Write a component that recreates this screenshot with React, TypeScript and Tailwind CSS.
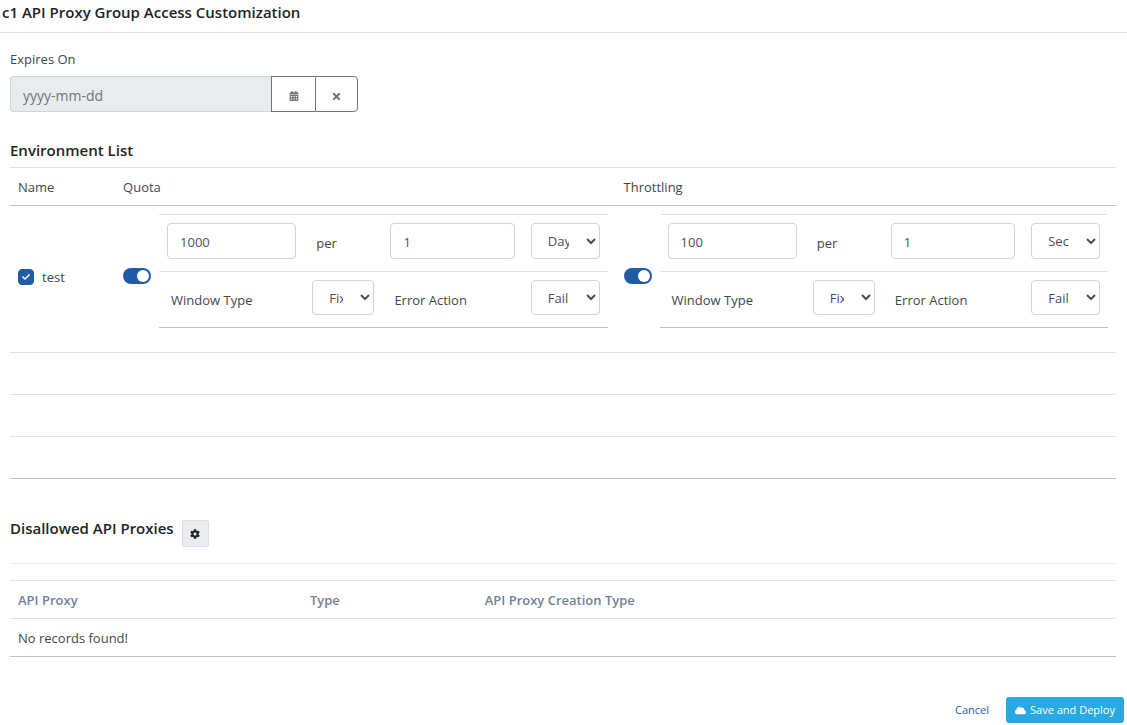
import { useState } from 'react'
import { FaCalendarAlt, FaCheck, FaCloud, FaCog, FaTimes } from 'react-icons/fa'

type Limit = {
  label: string
  amount: string
  period: string
  unit: string
  units: string[]
}

const quota: Limit = {
  label: 'Quota',
  amount: '1000',
  period: '1',
  unit: 'Day',
  units: ['Day', 'Hour', 'Minute'],
}

const throttling: Limit = {
  label: 'Throttling',
  amount: '100',
  period: '1',
  unit: 'Second',
  units: ['Second', 'Minute'],
}

const inputClass =
  'block h-9 w-full rounded border border-[#ced4da] bg-white px-3 pt-0.5 text-[#495057] outline-none'

const selectClass =
  'block w-full rounded border border-[#ced4da] bg-white pr-3.5 pl-3 text-[#495057] outline-none'

function Toggle({ label }: { label: string }) {
  const [on, setOn] = useState(true)

  return (
    <input
      type="checkbox"
      role="switch"
      aria-label={label}
      checked={on}
      onChange={() => setOn(!on)}
      className="flex h-4 w-7 shrink-0 appearance-none items-center rounded-full bg-gray-300 px-0.5 before:size-3 before:rounded-full before:bg-white checked:justify-end checked:bg-[#225ba5]"
    />
  )
}

function LimitEditor({ limit }: { limit: Limit }) {
  return (
    <div className="flex items-center gap-2">
      <div className="pb-1.5">
        <Toggle label={limit.label} />
      </div>
      <table className="mb-4 min-w-0 flex-1 table-fixed border-collapse border-b border-[#bfc3c7]">
        <colgroup>
          <col className="w-[32.4%]" />
          <col className="w-[17.4%]" />
          <col className="w-[31.3%]" />
          <col className="w-[18.9%]" />
        </colgroup>
        <tbody className="align-top">
          <tr className="border-t border-[#dee2e6]">
            <td className="px-2 pt-2 pb-3">
              <input
                aria-label={`${limit.label} amount`}
                defaultValue={limit.amount}
                className={inputClass}
              />
            </td>
            <td className="px-3 pt-[18px]">per</td>
            <td className="px-2 pt-2 pb-3">
              <input
                aria-label={`${limit.label} period`}
                defaultValue={limit.period}
                className={inputClass}
              />
            </td>
            <td className="px-2 pt-2 pb-3">
              <select
                aria-label={`${limit.label} unit`}
                defaultValue={limit.unit}
                className={`h-9 ${selectClass}`}
              >
                {limit.units.map((unit) => (
                  <option key={unit}>{unit}</option>
                ))}
              </select>
            </td>
          </tr>
          <tr className="border-t border-[#dee2e6]">
            <td className="px-3 pt-[18px]">
              <label htmlFor={`${limit.label}-window`}>Window Type</label>
            </td>
            <td className="px-2 pt-2 pb-3">
              <select
                id={`${limit.label}-window`}
                className={`h-[35px] ${selectClass}`}
              >
                <option>Fixed</option>
                <option>Sliding</option>
              </select>
            </td>
            <td className="px-3 pt-[18px]">
              <label htmlFor={`${limit.label}-error`}>Error Action</label>
            </td>
            <td className="px-2 pt-2 pb-3">
              <select
                id={`${limit.label}-error`}
                className={`h-[35px] ${selectClass}`}
              >
                <option>Fail</option>
                <option>Continue</option>
              </select>
            </td>
          </tr>
        </tbody>
      </table>
    </div>
  )
}

function EnvironmentTable() {
  const [checked, setChecked] = useState(true)

  return (
    <table className="w-full table-fixed border-collapse border-b border-[#bfc3c7]">
      <colgroup>
        <col className="w-[9.5%]" />
        <col />
        <col />
      </colgroup>
      <thead>
        <tr className="h-[38px] border-t border-b border-t-[#dee2e6] border-b-[#bfc3c7] text-left">
          <th className="px-2 font-normal">Name</th>
          <th className="px-2 font-normal">Quota</th>
          <th className="px-2 font-normal">Throttling</th>
        </tr>
      </thead>
      <tbody>
        <tr>
          <td className="p-2">
            <label className="flex items-center gap-2 pb-1">
              <span className="relative size-4">
                <input
                  type="checkbox"
                  checked={checked}
                  onChange={() => setChecked(!checked)}
                  className="peer block size-4 appearance-none rounded border border-gray-400 checked:border-[#225ba5] checked:bg-[#225ba5]"
                />
                <FaCheck className="pointer-events-none absolute inset-1 hidden size-2 text-white peer-checked:block" />
              </span>
              test
            </label>
          </td>
          <td className="p-2">
            <LimitEditor limit={quota} />
          </td>
          <td className="p-2">
            <LimitEditor limit={throttling} />
          </td>
        </tr>
        {[0, 1, 2].map((row) => (
          <tr key={row} className="h-[42px] border-t border-[#dee2e6]">
            <td colSpan={3} />
          </tr>
        ))}
      </tbody>
    </table>
  )
}

export default function App() {
  return (
    <div className="bg-white font-['Open_Sans','Noto_Sans',sans-serif] text-[13px] leading-5 text-[#3f474e]">
      <header className="border-b border-[#dee2e6] px-0.5 pt-px pb-[9px]">
        <h1 className="text-[15px] leading-[22px] font-semibold text-[#212529]">
          c1 API Proxy Group Access Customization
        </h1>
      </header>

      <main className="pr-[11px] pl-[10px]">
        <div className="pt-4">
          <label htmlFor="expires" className="block">
            Expires On
          </label>
          <div className="mt-[7px] flex w-[348px]">
            <input
              id="expires"
              readOnly
              placeholder="yyyy-mm-dd"
              className="h-9 min-w-0 flex-1 rounded-l border border-r-0 border-[#ced4da] bg-[#e9ecef] px-3 pt-0.5 text-sm outline-none placeholder:text-[#6c757d]"
            />
            <button
              type="button"
              aria-label="Pick date"
              className="flex h-9 w-11 items-center justify-center border border-r-0 border-[#6c757d] pt-1 text-[10px] text-[#6c757d]"
            >
              <FaCalendarAlt />
            </button>
            <button
              type="button"
              aria-label="Clear date"
              className="flex h-9 w-[43px] items-center justify-center rounded-r border border-[#6c757d] pt-1 text-[11px] text-[#6c757d]"
            >
              <FaTimes />
            </button>
          </div>
        </div>

        <h2 className="mt-[27px] mb-1.5 text-[15px] leading-[22px] font-semibold text-[#212529]">
          Environment List
        </h2>
        <EnvironmentTable />

        <div className="mt-[38px] flex items-end gap-2 border-b border-[#e9ecef] pb-4">
          <h2 className="pb-2 text-[15px] leading-[22px] font-semibold text-[#212529]">
            Disallowed API Proxies
          </h2>
          <button
            type="button"
            aria-label="Configure proxies"
            className="flex h-[27px] w-[27px] items-center justify-center rounded-xs border border-[#dcdee3] bg-[#ebecf1] text-[10px] text-[#212529]"
          >
            <FaCog />
          </button>
        </div>

        <table className="mt-4 w-full table-fixed border-collapse border-b border-[#bfc3c7]">
          <colgroup>
            <col className="w-[26.4%]" />
            <col className="w-[15.8%]" />
            <col />
          </colgroup>
          <thead>
            <tr className="h-[38px] border-t border-b border-[#dee2e6] text-left text-[#748194]">
              <th className="px-2 font-semibold">API Proxy</th>
              <th className="px-2 font-semibold">Type</th>
              <th className="px-2 font-semibold">API Proxy Creation Type</th>
            </tr>
          </thead>
          <tbody>
            <tr className="h-[38px]">
              <td colSpan={3} className="px-2">
                No records found!
              </td>
            </tr>
          </tbody>
        </table>
      </main>

      <footer className="mt-10 flex justify-end gap-2 pr-[3px] text-[11px] leading-4">
        <button type="button" className="h-[26px] px-[9px] text-[#225ba5]">
          Cancel
        </button>
        <button
          type="button"
          className="flex h-[26px] items-center gap-1 rounded-[3px] bg-[#27a9e3] px-[9px] text-white"
        >
          <FaCloud />
          Save and Deploy
        </button>
      </footer>
    </div>
  )
}
